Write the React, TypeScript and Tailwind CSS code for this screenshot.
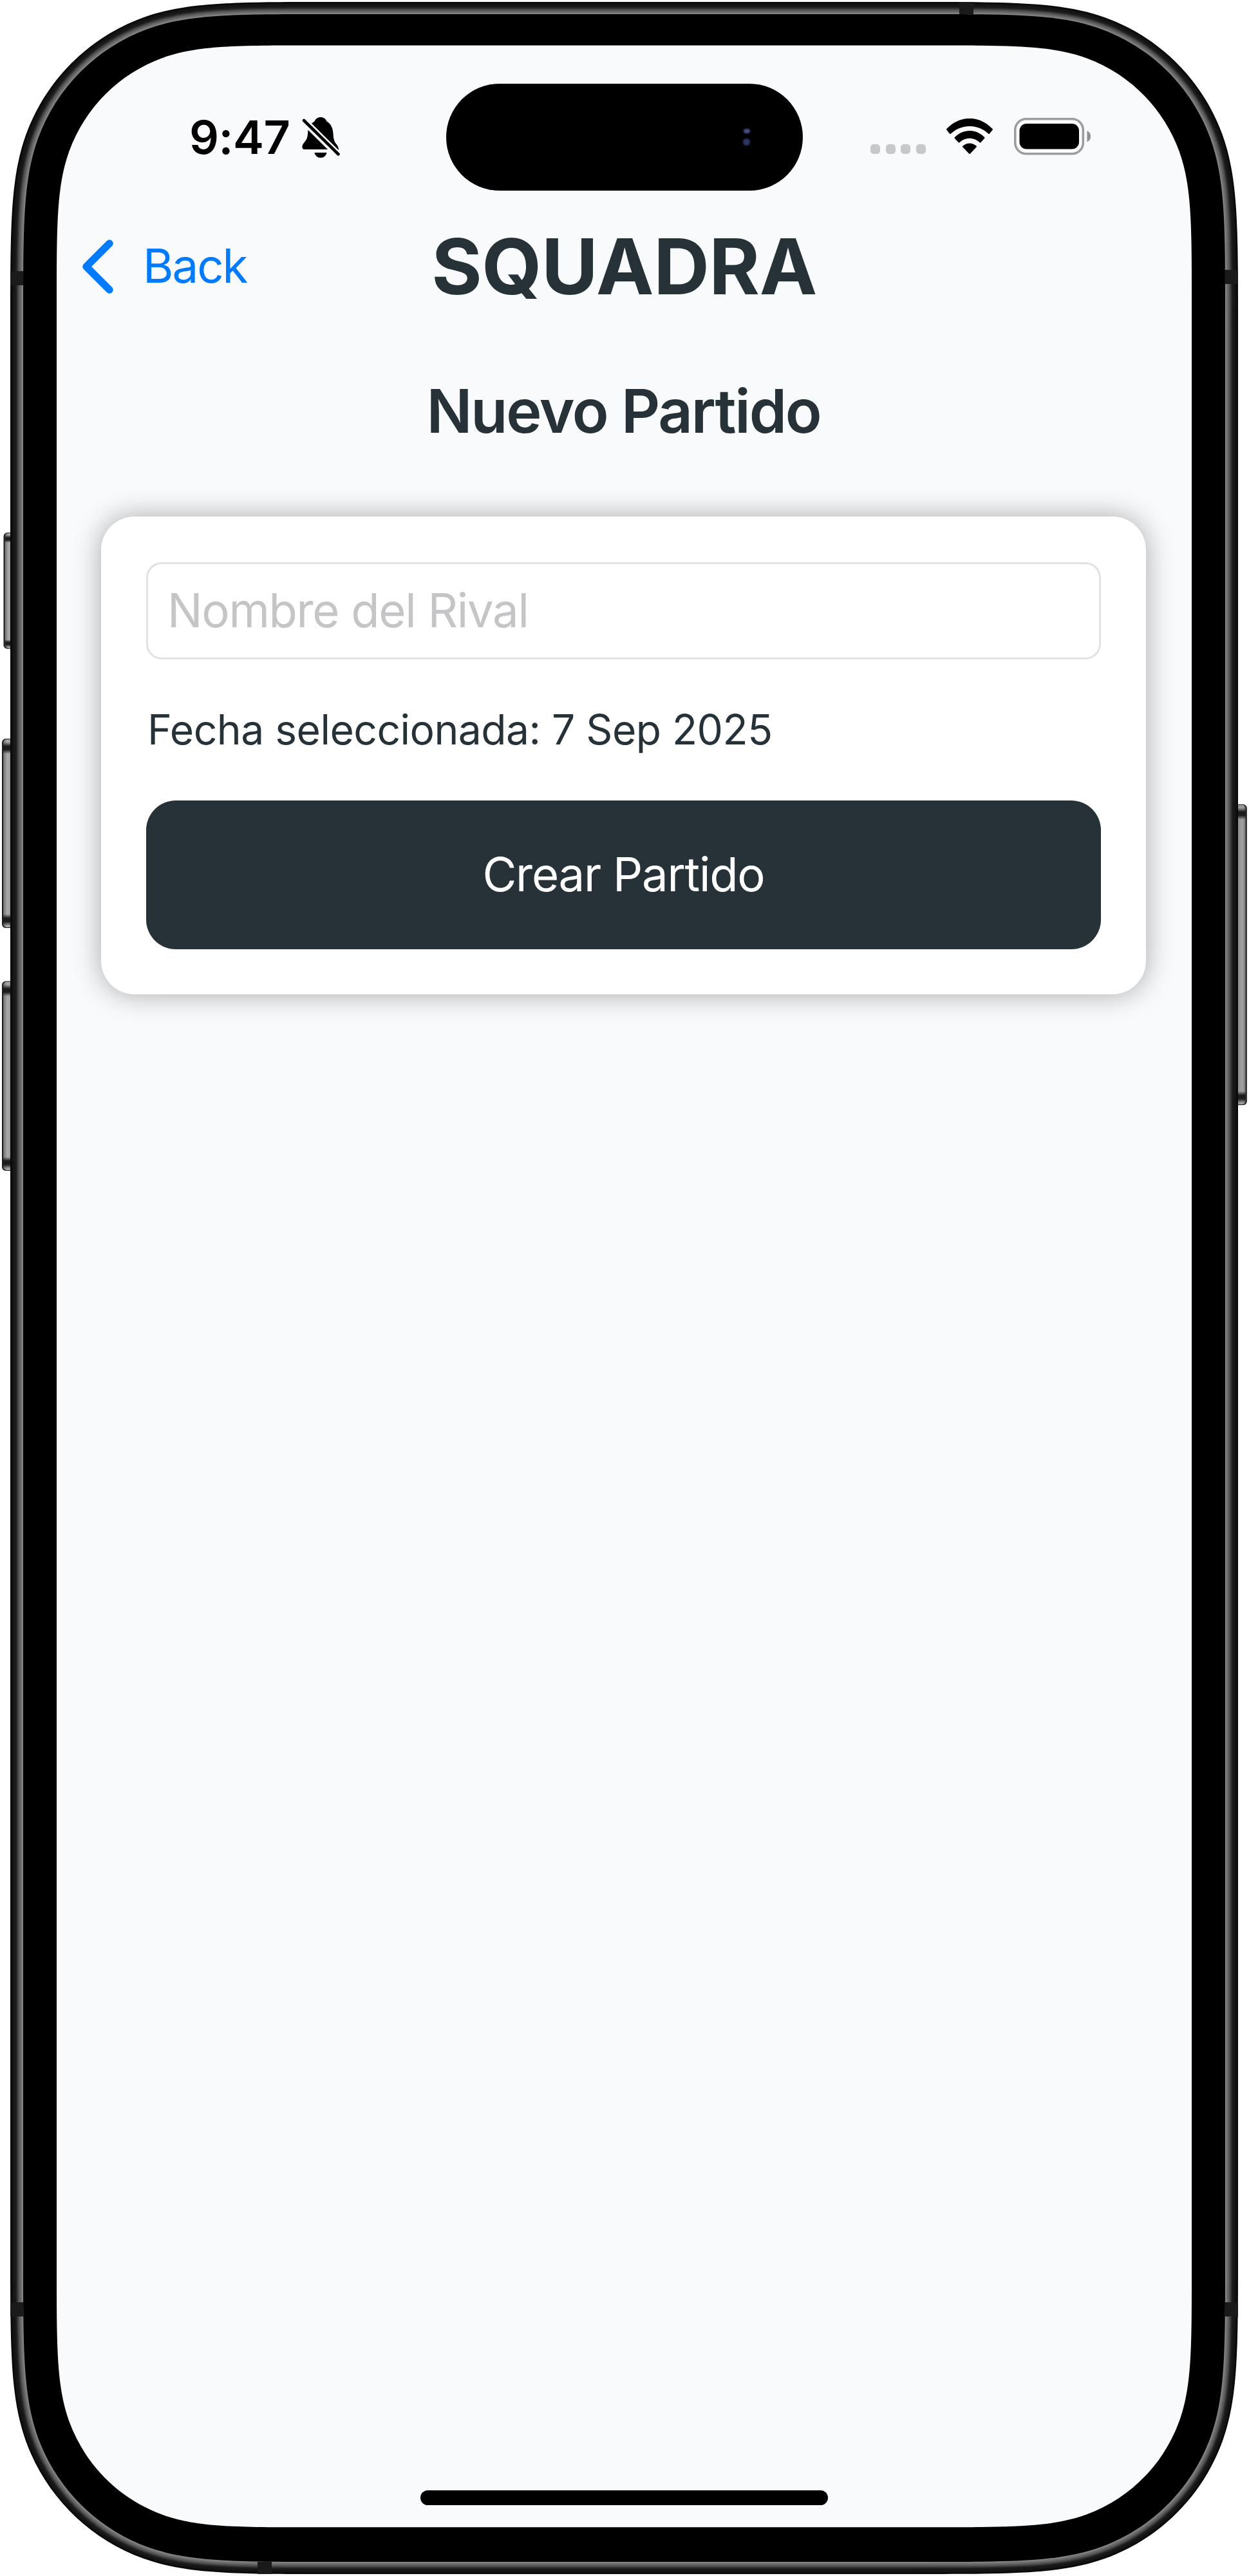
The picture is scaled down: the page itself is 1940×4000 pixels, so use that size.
import React from "react";

// Continuous-curvature rounded rectangle.
function squircle(x0: number, y0: number, x1: number, y1: number, r: number) {
  const corner: [number, number][] = [
    [0, 1.52866],
    [0, 1.07],
    [0, 0.84],
    [0.07491, 0.63149],
    [0.16906, 0.37282],
    [0.37282, 0.16906],
    [0.63149, 0.07491],
    [0.84, 0],
    [1.07, 0],
    [1.52866, 0],
  ];
  const rev = [...corner].reverse();
  const tl = corner.map(([a, b]) => [x0 + a * r, y0 + b * r]);
  const tr = rev.map(([a, b]) => [x1 - a * r, y0 + b * r]);
  const br = corner.map(([a, b]) => [x1 - a * r, y1 - b * r]);
  const bl = rev.map(([a, b]) => [x0 + a * r, y1 - b * r]);
  const parts = [tl, tr, br, bl].map((c, i) => {
    const p = c.map((q) => q[0].toFixed(2) + " " + q[1].toFixed(2));
    return `${i === 0 ? "M" : "L"}${p[0]}C${p.slice(1).join(" ")}`;
  });
  return parts.join("") + "Z";
}

// Grey level of the metal rail, from the outer edge inwards.
const rail = [8, 10, 14, 18, 21, 22, 23, 25, 28, 36, 48, 62, 76, 86, 94, 102, 110, 118, 126, 134];

type SideButtonProps = { x: number; y: number; w: number; h: number; cap: number; right?: boolean };

function SideButton({ x, y, w, h, cap, right }: SideButtonProps) {
  const id = right ? "btnR" : "btnL";
  return (
    <g>
      <rect x={right ? x - 10 : x} y={y} width={w + 10} height={h} rx={6} fill="#1c1c1c" />
      <rect x={right ? x - 10 : x + 2} y={y + 1} width={w + 8} height={h - 2} rx={5} fill={`url(#${id})`} />
      <rect x={right ? x : x + 2} y={y + cap * 0.3} width={w - 2} height={cap} fill="url(#cap)" />
      <rect x={right ? x : x + 2} y={y + h - cap * 1.2} width={w - 2} height={cap} fill="url(#cap)" />
    </g>
  );
}

function DeviceFrame() {
  return (
    <svg className="absolute inset-0" width="1940" height="4000" viewBox="0 0 1940 4000" aria-hidden="true">
      <defs>
        <linearGradient id="btnL">
          <stop offset="0" stopColor="#6e6e6e" />
          <stop offset="0.3" stopColor="#a8a8a8" />
          <stop offset="1" stopColor="#808080" />
        </linearGradient>
        <linearGradient id="btnR">
          <stop offset="0" stopColor="#808080" />
          <stop offset="0.8" stopColor="#a0a0a0" />
          <stop offset="1" stopColor="#6e6e6e" />
        </linearGradient>
        <linearGradient id="cap" x1="0" y1="0" x2="0" y2="1">
          <stop offset="0" stopColor="#1c1c1c" stopOpacity="0" />
          <stop offset="0.35" stopColor="#1c1c1c" />
          <stop offset="0.65" stopColor="#1c1c1c" />
          <stop offset="1" stopColor="#1c1c1c" stopOpacity="0" />
        </linearGradient>
      </defs>
      <SideButton x={5.5} y={827} w={10.5} h={180.5} cap={12} />
      <SideButton x={3} y={1147} w={13} h={294} cap={18} />
      <SideButton x={3} y={1523.5} w={13} h={294.5} cap={18} />
      <SideButton x={1923} y={1249} w={13.8} h={467} cap={18} right />
      {rail.map((g, i) => (
        <path
          key={i}
          d={squircle(16 + i, 3 + i * 0.95, 1923 - i, 3997 - i * 0.95, 326 - i)}
          fill={`rgb(${g},${g},${g})`}
        />
      ))}
      <g fill="#1a1a1a">
        <rect x="1490" y="3" width="22" height="19" />
        <rect x="400" y="3978" width="22" height="19" />
        <rect x="16" y="421" width="20" height="22" />
        <rect x="1903" y="419" width="20" height="22" />
        <rect x="16" y="3575" width="20" height="22" />
        <rect x="1903" y="3575" width="20" height="22" />
      </g>
      <path d={squircle(36, 22, 1903, 3978, 306)} fill="#000" />
      <path d={squircle(88, 70.5, 1851, 3924.3, 260)} fill="#f9fafc" />
    </svg>
  );
}

function MutedBell() {
  return (
    <svg width="62" height="68" viewBox="0 0 62 68" aria-hidden="true">
      <path
        d="M30 2C34.500 2 38 4.500 39.500 8.500C46 12 49 19 49.500 27C50 36 51 40 55 44.500C57.500 47.500 58.500 51 57.500 54L55 54Q54 53 53 52H5C2 52 1 49.500 1.500 46.500C2 44 4 42 6 39.500C9 36 10 31 10.300 24C11 17 14 12 20.500 8.500C22 4.500 25.500 2 30 2Z"
        fill="#000"
      />
      <path d="M20.500 57H39.500C38.500 61.500 35 65 30 65S21.500 61.500 20.500 57Z" fill="#000" />
      <path d="M4 7.500L57.500 60.500" stroke="#f9fafc" strokeWidth="11" />
      <path d="M4 7L57.500 59.500" stroke="#000" strokeWidth="4.600" strokeLinecap="round" />
    </svg>
  );
}

function Wifi() {
  return (
    <svg width="74" height="56" viewBox="0 0 74 56" aria-hidden="true">
      <path
        d="M1.500 16C22 -5.500 52 -5.500 72.500 16Q73.500 17 72.500 18L68 23.500Q67 24.500 66 23.500C50 8 24 8 8 23.500Q7 24.500 6 23.500L1.500 18Q0.500 17 1.500 16Z"
        fill="#000"
      />
      <path
        d="M14 29C27 15.500 47 15.500 60 29Q61 30 60 31L54.500 37Q53.500 38 52.500 37C43 28.500 31 28.500 21.500 37Q20.500 38 19.500 37L14 31Q13 30 14 29Z"
        fill="#000"
      />
      <path d="M26.500 42.500Q37 34.500 47.500 42.500Q48.500 43.500 47.500 44.500L38 54.500Q37 55.500 36 54.500L26.500 44.500Q25.500 43.500 26.500 42.500Z" fill="#000" />
    </svg>
  );
}

function Battery() {
  return (
    <svg width="121" height="58" viewBox="0 0 121 58" aria-hidden="true">
      <rect x="1.800" y="1.800" width="105.500" height="54" rx="17" fill="#fff" stroke="#9c9d9f" strokeWidth="3.600" />
      <rect x="8.500" y="9" width="92.500" height="39.500" rx="11" fill="#000" />
      <path d="M113.500 20C121 23 121 34.500 113.500 37.500Z" fill="#8f9092" />
    </svg>
  );
}

export default function App() {
  return (
    <div className="relative h-[4000px] w-[1940px] overflow-hidden bg-white font-['Inter',sans-serif]">
      <DeviceFrame />
      <div className="relative flex h-full flex-col pt-[130px] pr-[89px] pl-[88px]">
        <header className="flex h-[166px] items-center">
          <div className="flex w-[605px] items-center pl-[206px]">
            <span className="w-[158px] text-[72px] leading-none font-semibold tracking-[-0.5px] whitespace-nowrap">9:47</span>
            <span className="ml-[16px] pt-[2px]"><MutedBell /></span>
          </div>
          <div className="flex h-[166px] w-[554px] items-center justify-end rounded-full bg-black pr-[82px]">
            <div className="flex flex-col items-center gap-2">
              <div className="h-[7px] w-[10px] rounded-full bg-[#4a4a86] blur-[1px]" />
              <div className="h-[11px] w-[11px] rounded-full bg-[#2c3566] blur-[1px]" />
            </div>
          </div>
          <div className="flex items-center pb-[2px] pl-[105px]">
            <div className="flex gap-[8.5px] pt-[39px]">
              {[0, 1, 2, 3].map((i) => (
                <div key={i} className="h-[15px] w-[15px] rounded-[5px] bg-[#c7c8ca]" />
              ))}
            </div>
            <span className="ml-[31px]"><Wifi /></span>
            <span className="ml-[32px]"><Battery /></span>
          </div>
        </header>
        <nav className="grid h-[235px] grid-cols-[1fr_auto_1fr] items-center">
          <button className="flex items-center gap-[44px] pl-[38px] text-[72.5px] leading-none tracking-[-2px] text-[#007aff]">
            <svg width="52" height="86" viewBox="0 0 52 86" fill="none" aria-hidden="true">
              <path d="M44 7L8 43L44 79" stroke="#007aff" strokeWidth="11.5" strokeLinecap="round" strokeLinejoin="round" />
            </svg>
            <span>Back</span>
          </button>
          <h1 className="text-[120px] leading-none font-bold tracking-[-0.5px] text-[#263238]">SQUADRA</h1>
          <span />
        </nav>
        <main className="flex flex-col items-stretch pr-[71px] pl-[69px]">
          <h2 className="mt-[3px] flex h-[208px] items-center justify-center text-[93.5px] font-semibold tracking-[-2.15px] text-[#263238]">
            Nuevo Partido
          </h2>
          <section className="mt-[60px] flex h-[742px] flex-col rounded-[52px] bg-white px-[70px] pt-[71px] shadow-[0_0_44px_rgba(0,0,0,0.33)]">
            <div className="flex h-[151px] items-center rounded-[24px] border-[3px] border-[#e2e2e2] pl-[30px] text-[72.5px] tracking-[-1.35px] text-[#c5c5c7]">
              Nombre del Rival
            </div>
            <p className="flex h-[219px] items-center pl-[2px] text-[64.2px] tracking-[-0.55px] text-[#263238]">
              Fecha seleccionada: 7 Sep 2025
            </p>
            <button className="h-[231px] rounded-[46px] bg-[#263238] text-[72.5px] tracking-[-1.3px] text-white">
              Crear Partido
            </button>
          </section>
        </main>
        <div className="mt-auto mb-[110.5px] h-[23px] w-[633px] self-center rounded-full bg-black" />
      </div>
    </div>
  );
}
